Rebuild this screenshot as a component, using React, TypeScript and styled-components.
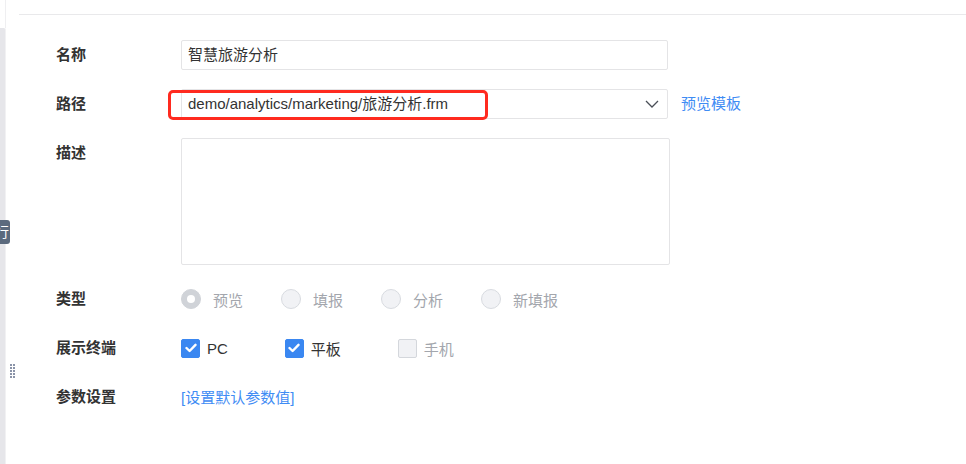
import React from "react";
import styled, { createGlobalStyle } from "styled-components";

const Global = createGlobalStyle`
  html, body { margin: 0; padding: 0; background: #fff; }
  body {
    font-family: "Liberation Sans", "Noto Sans CJK SC", sans-serif;
    font-size: 15px;
    color: #333;
    width: 966px;
    height: 464px;
    overflow: hidden;
  }
`;

const Page = styled.div`
  position: relative;
  display: flex;
  width: 966px;
  height: 464px;
`;

const Rail = styled.div`
  width: 6px;
  flex: none;
  display: flex;
  flex-direction: column;
`;

const RailTop = styled.div`
  height: 28px;
  border-right: 1px solid #efeff1;
`;

const RailBody = styled.div`
  flex: 1;
  background: #e6e6ea;
  border-top-right-radius: 2px;
  border-right: 1px solid #f1f1f3;
`;

const SideTab = styled.div`
  position: absolute;
  left: 0;
  top: 220px;
  width: 10px;
  height: 24px;
  background: #5b6a7e;
  border-radius: 0 3px 3px 0;
  overflow: hidden;
  color: #fff;
  font-size: 14px;
  line-height: 24px;
  span {
    position: absolute;
    left: -5px;
    top: 0;
  }
`;

const Handle = styled.svg`
  position: absolute;
  left: 10px;
  top: 364px;
`;

const Main = styled.div`
  flex: 1;
  padding-top: 14px;
  padding-left: 13px;
`;

const Rule = styled.div`
  height: 1px;
  background: #e9e9eb;
`;

const Form = styled.div`
  display: flex;
  flex-direction: column;
  gap: 19px;
  padding: 25px 0 0 37px;
`;

const Row = styled.div`
  display: flex;
  align-items: flex-start;
`;

const Label = styled.div`
  width: 125px;
  flex: none;
  line-height: 30px;
  font-weight: 700;
  color: #333;
  font-size: 15px;
`;

const TextInput = styled.div`
  width: 487px;
  height: 30px;
  box-sizing: border-box;
  border: 1px solid #e4e4e6;
  border-radius: 2px;
  padding: 0 6px;
  line-height: 28px;
  color: #333;
`;

const SelectWrap = styled.div`
  position: relative;
  display: flex;
  align-items: center;
`;

const Select = styled(TextInput)`
  display: flex;
  align-items: center;
  justify-content: space-between;
  padding-right: 8px;
`;

const Highlight = styled.div`
  position: absolute;
  left: -13px;
  top: 1px;
  width: 320px;
  height: 30px;
  box-sizing: border-box;
  border: 3px solid #ff2a1f;
  border-radius: 5px;
  pointer-events: none;
`;

const Link = styled.span`
  color: #3f8cf4;
  margin-left: 13px;
  line-height: 30px;
`;

const ParamLink = styled.span`
  color: #3f8cf4;
  line-height: 30px;
  margin-top: 1px;
`;

const TextArea = styled.div`
  width: 489px;
  height: 127px;
  box-sizing: border-box;
  border: 1px solid #e4e4e6;
  border-radius: 2px;
`;

const Options = styled.div`
  display: flex;
  align-items: center;
  height: 30px;
`;

const RadioItem = styled.div`
  width: 100px;
  display: flex;
  align-items: center;
  gap: 12px;
  color: #a3a6ad;
`;

const RadioDot = styled.span<{ $checked?: boolean }>`
  width: 20px;
  height: 20px;
  box-sizing: border-box;
  border-radius: 50%;
  flex: none;
  border: 1px solid ${(p) => (p.$checked ? "#d0d3d8" : "#d8dbe0")};
  background: ${(p) => (p.$checked ? "#d0d3d8" : "#f1f2f5")};
  display: flex;
  align-items: center;
  justify-content: center;
  &::after {
    content: "";
    width: 8px;
    height: 8px;
    border-radius: 50%;
    background: ${(p) => (p.$checked ? "#fff" : "transparent")};
  }
`;

const CheckItem = styled.div<{ $disabled?: boolean }>`
  display: flex;
  align-items: center;
  gap: 7px;
  margin-right: 57px;
  color: ${(p) => (p.$disabled ? "#a3a6ad" : "#333")};
`;

const Box = styled.span<{ $checked?: boolean }>`
  width: 19px;
  height: 19px;
  box-sizing: border-box;
  border-radius: 2px;
  flex: none;
  display: flex;
  align-items: center;
  justify-content: center;
  background: ${(p) => (p.$checked ? "#3a87f1" : "#f1f2f5")};
  border: 1px solid ${(p) => (p.$checked ? "#3a87f1" : "#d4d7dc")};
`;

const Check = () => (
  <svg width="12" height="10" viewBox="0 0 12 10">
    <polyline points="1.5,5 4.6,8 10.5,1.8" fill="none" stroke="#fff" strokeWidth="2.4" strokeLinecap="round" strokeLinejoin="round" />
  </svg>
);

const Chevron = () => (
  <svg width="14" height="8" viewBox="0 0 14 8">
    <polyline points="1,1 7,7 13,1" fill="none" stroke="#4a4f57" strokeWidth="1.3" />
  </svg>
);

export default function App() {
  const dots = [];
  for (let r = 0; r < 5; r++) {
    for (let c = 0; c < 2; c++) {
      dots.push(<rect key={`${r}-${c}`} x={c * 3} y={r * 3} width="2" height="2" fill="#8a93a8" />);
    }
  }
  return (
    <>
      <Global />
      <Page>
        <Rail>
          <RailTop />
          <RailBody />
        </Rail>
        <SideTab>
          <span>行</span>
        </SideTab>
        <Handle width="5" height="14" viewBox="0 0 5 14">
          {dots}
        </Handle>
        <Main>
          <Rule />
          <Form>
            <Row>
              <Label>名称</Label>
              <TextInput>智慧旅游分析</TextInput>
            </Row>
            <Row>
              <Label>路径</Label>
              <SelectWrap>
                <Select>
                  <span>demo/analytics/marketing/旅游分析.frm</span>
                  <Chevron />
                </Select>
                <Highlight />
                <Link>预览模板</Link>
              </SelectWrap>
            </Row>
            <Row>
              <Label>描述</Label>
              <TextArea />
            </Row>
            <Row>
              <Label>类型</Label>
              <Options>
                <RadioItem>
                  <RadioDot $checked />
                  预览
                </RadioItem>
                <RadioItem>
                  <RadioDot />
                  填报
                </RadioItem>
                <RadioItem>
                  <RadioDot />
                  分析
                </RadioItem>
                <RadioItem>
                  <RadioDot />
                  新填报
                </RadioItem>
              </Options>
            </Row>
            <Row>
              <Label>展示终端</Label>
              <Options>
                <CheckItem>
                  <Box $checked>
                    <Check />
                  </Box>
                  PC
                </CheckItem>
                <CheckItem>
                  <Box $checked>
                    <Check />
                  </Box>
                  平板
                </CheckItem>
                <CheckItem $disabled>
                  <Box />
                  手机
                </CheckItem>
              </Options>
            </Row>
            <Row>
              <Label>参数设置</Label>
              <ParamLink>[设置默认参数值]</ParamLink>
            </Row>
          </Form>
        </Main>
      </Page>
    </>
  );
}
